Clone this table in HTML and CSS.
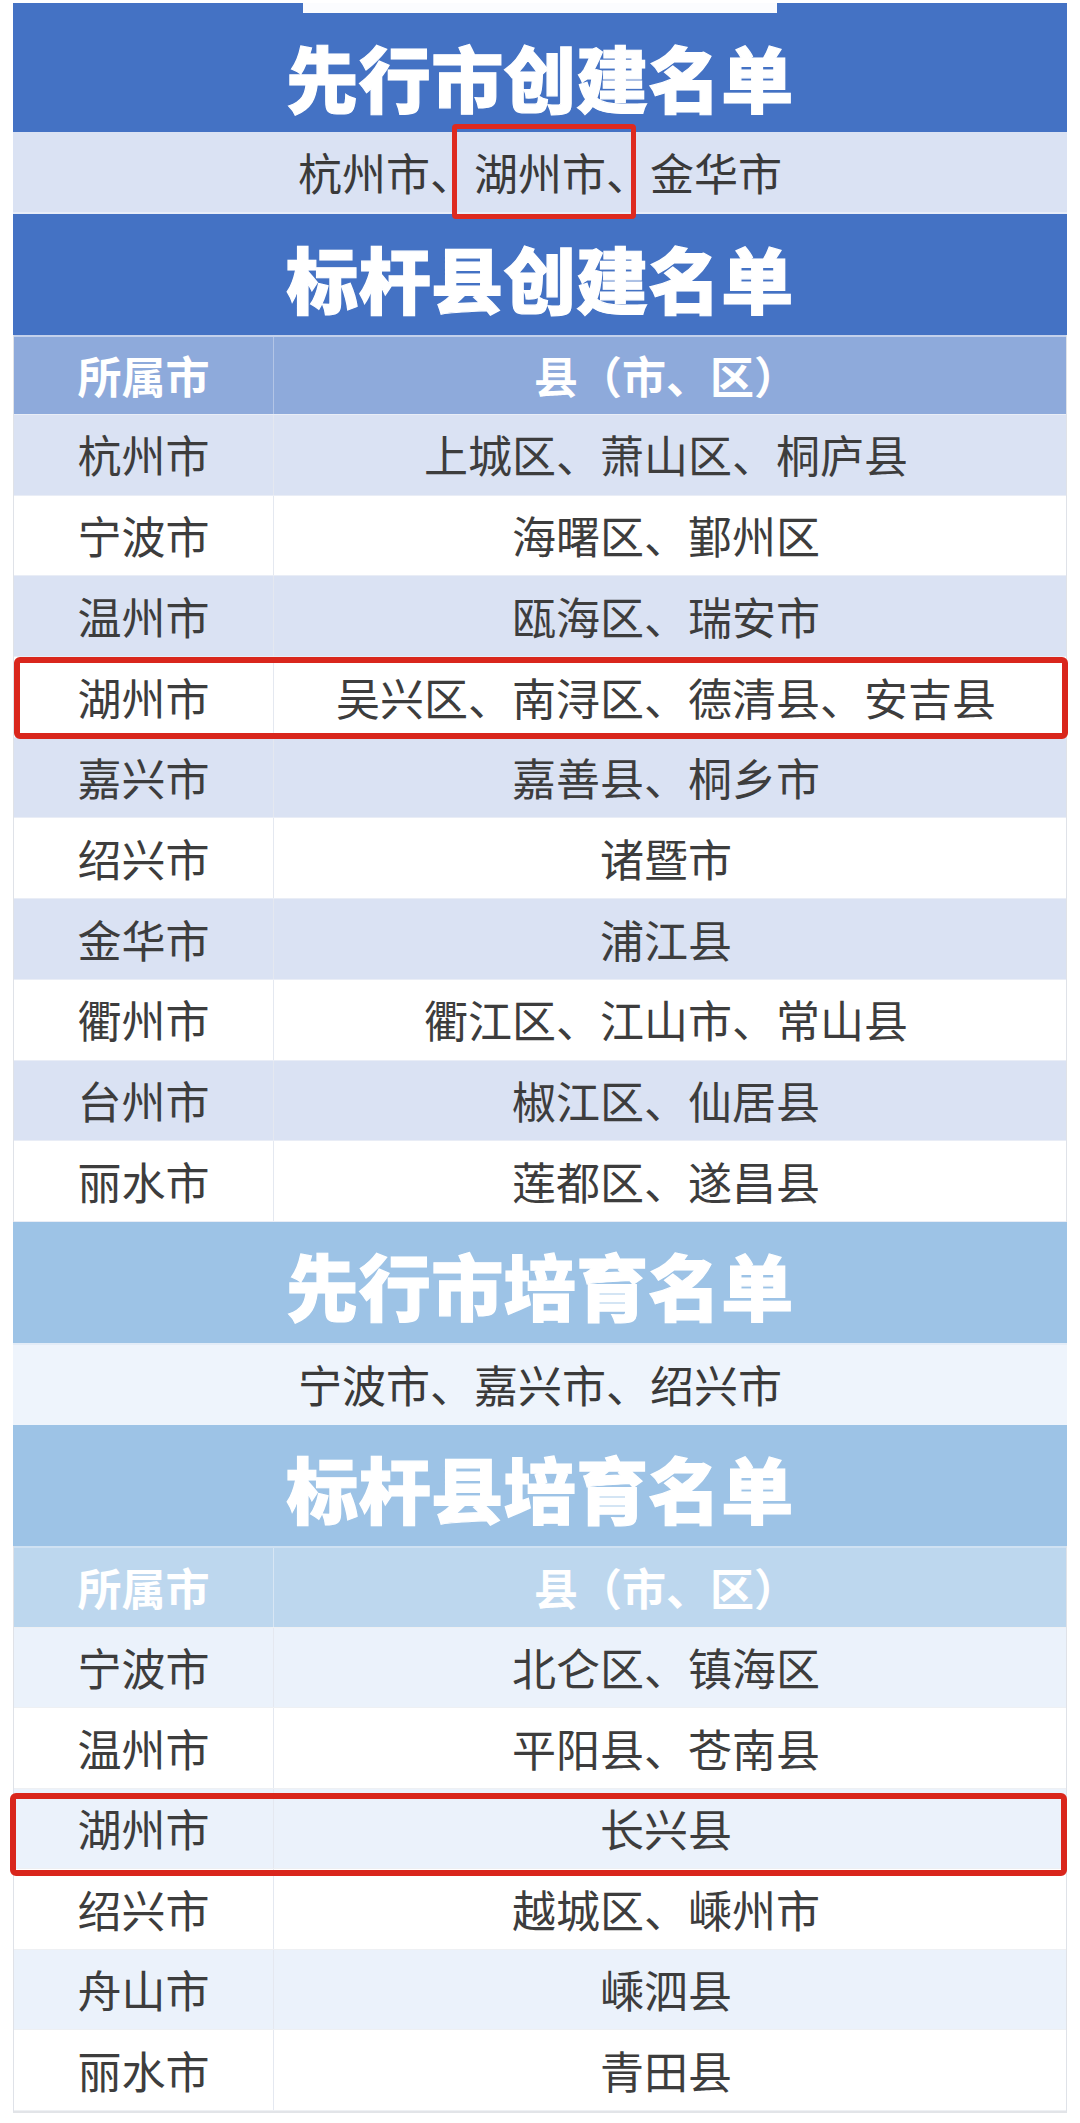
FILE: index.html
```html
<!DOCTYPE html>
<html lang="zh-CN">
<head>
<meta charset="utf-8">
<title>先行市、标杆县名单</title>
<link rel="stylesheet" href="styles.css">
</head>
<body>
<div class="sheet">
  <div class="title dark first">先行市创建名单</div>
  <div class="band band-dark"><span>杭州市、<span class="mark">湖州市、</span>金华市</span></div>

  <div class="title dark">标杆县创建名单</div>
  <div class="table tbl-dark">
    <div class="row head"><div class="c1">所属市</div><div class="c2">县（市、区）</div></div>
    <div class="row alt"><div class="c1">杭州市</div><div class="c2">上城区、萧山区、桐庐县</div></div>
    <div class="row"><div class="c1">宁波市</div><div class="c2">海曙区、鄞州区</div></div>
    <div class="row alt"><div class="c1">温州市</div><div class="c2">瓯海区、瑞安市</div></div>
    <div class="row hl hl-a"><div class="c1">湖州市</div><div class="c2">吴兴区、南浔区、德清县、安吉县</div></div>
    <div class="row alt"><div class="c1">嘉兴市</div><div class="c2">嘉善县、桐乡市</div></div>
    <div class="row"><div class="c1">绍兴市</div><div class="c2">诸暨市</div></div>
    <div class="row alt"><div class="c1">金华市</div><div class="c2">浦江县</div></div>
    <div class="row"><div class="c1">衢州市</div><div class="c2">衢江区、江山市、常山县</div></div>
    <div class="row alt"><div class="c1">台州市</div><div class="c2">椒江区、仙居县</div></div>
    <div class="row"><div class="c1">丽水市</div><div class="c2">莲都区、遂昌县</div></div>
  </div>

  <div class="title light">先行市培育名单</div>
  <div class="band band-light"><span>宁波市、嘉兴市、绍兴市</span></div>

  <div class="title light">标杆县培育名单</div>
  <div class="table tbl-light">
    <div class="row head"><div class="c1">所属市</div><div class="c2">县（市、区）</div></div>
    <div class="row alt"><div class="c1">宁波市</div><div class="c2">北仑区、镇海区</div></div>
    <div class="row"><div class="c1">温州市</div><div class="c2">平阳县、苍南县</div></div>
    <div class="row alt hl hl-b"><div class="c1">湖州市</div><div class="c2">长兴县</div></div>
    <div class="row"><div class="c1">绍兴市</div><div class="c2">越城区、嵊州市</div></div>
    <div class="row alt"><div class="c1">舟山市</div><div class="c2">嵊泗县</div></div>
    <div class="row"><div class="c1">丽水市</div><div class="c2">青田县</div></div>
  </div>
</div>
</body>
</html>
```

FILE: styles.css
```css
* { box-sizing: border-box; }

html, body {
  margin: 0;
  padding: 0;
  background: #ffffff;
}

body {
  font-family: "Noto Sans CJK SC", "Noto Sans", sans-serif;
  color: #3d3d3d;
}

.sheet {
  width: 1080px;
  padding: 3px 13px 0;
}

/* ---------- section titles ---------- */
.title {
  display: flex;
  justify-content: center;
  align-items: center;
  height: 121px;
  padding-top: 4px;
  color: #ffffff;
  font-size: 72px;
  font-weight: 900;
  line-height: 1;
  letter-spacing: 0.5px;
  -webkit-text-stroke: 1.2px #ffffff;
}

.title.dark { background: #4472c4; }
.title.light { background: #9dc3e6; }

.title.first {
  position: relative;
  height: 129px;
  padding-top: 16px;
}

.title.first::before {
  content: "";
  position: absolute;
  left: -10px;
  right: -10px;
  top: 0;
  height: 79px;
  background: #4472c4;
  z-index: -1;
}

.title.first::after {
  content: "";
  position: absolute;
  left: 290px;
  width: 474px;
  top: 0;
  height: 10px;
  background: #fbfcfe;
}

/* ---------- single line bands ---------- */
.band {
  display: flex;
  justify-content: center;
  align-items: center;
  height: 81px;
  font-size: 44px;
  line-height: 1.2;
  color: #3a3a3a;
}

.band-dark {
  background: #dae2f3;
  border-bottom: 2px solid #e8edf8;
  height: 82px;
}

.band-light {
  background: #eef4fc;
  border-top: 2px solid #e3ecf7;
  height: 82px;
}

.mark {
  position: relative;
}

.mark::after {
  content: "";
  position: absolute;
  left: -22px;
  width: 174px;
  top: -16px;
  bottom: -15px;
  border: 5px solid #de2a1f;
  border-radius: 4px;
}

/* ---------- tables ---------- */
.table {
  border-left: 1px solid #dfe2e8;
  border-right: 1px solid #dfe2e8;
}

.tbl-light {
  border-bottom: 2px solid #e2e4e8;
}

.row {
  display: grid;
  grid-template-columns: 259px 1fr;
  height: 80.7px;
  font-size: 44px;
  line-height: 1.2;
  color: #3d3d3d;
}

.row .c1,
.row .c2 {
  display: flex;
  justify-content: center;
  align-items: center;
}

.row .c2 {
  border-left: 1px solid #e4e8f0;
  padding-right: 8px;
}

.row.head {
  color: #ffffff;
  font-weight: 700;
  height: 80px;
}

.tbl-dark .row.head {
  background: #8eaadb;
  border-top: 2px solid #c3d1ec;
}

.tbl-dark .row.head .c2 { border-left-color: #b3c5e6; }

.tbl-dark .row.alt { background: #dae2f3; }
.tbl-dark .row { border-bottom: 1px solid #e9edf6; }

.tbl-light .row.head {
  background: #bdd7ee;
  height: 82px;
  border-top: 2px solid #cfe1f2;
}

.tbl-light .row.head .c2 { border-left-color: #d7e6f4; }

.tbl-light .row { height: 80.5px; border-bottom: 1px solid #eef0f3; }
.tbl-light .row.alt { background: #ebf2fb; }

/* ---------- red highlight frames ---------- */
.row.hl { position: relative; }

.row.hl::after {
  content: "";
  position: absolute;
  border: 6px solid #d9261c;
  border-radius: 6px;
  pointer-events: none;
}

.row.hl-a::after {
  left: 0;
  right: -2px;
  top: 0;
  bottom: -2px;
}

.row.hl-b::after {
  left: -4px;
  right: -1px;
  top: 4px;
  bottom: -8px;
}
```
